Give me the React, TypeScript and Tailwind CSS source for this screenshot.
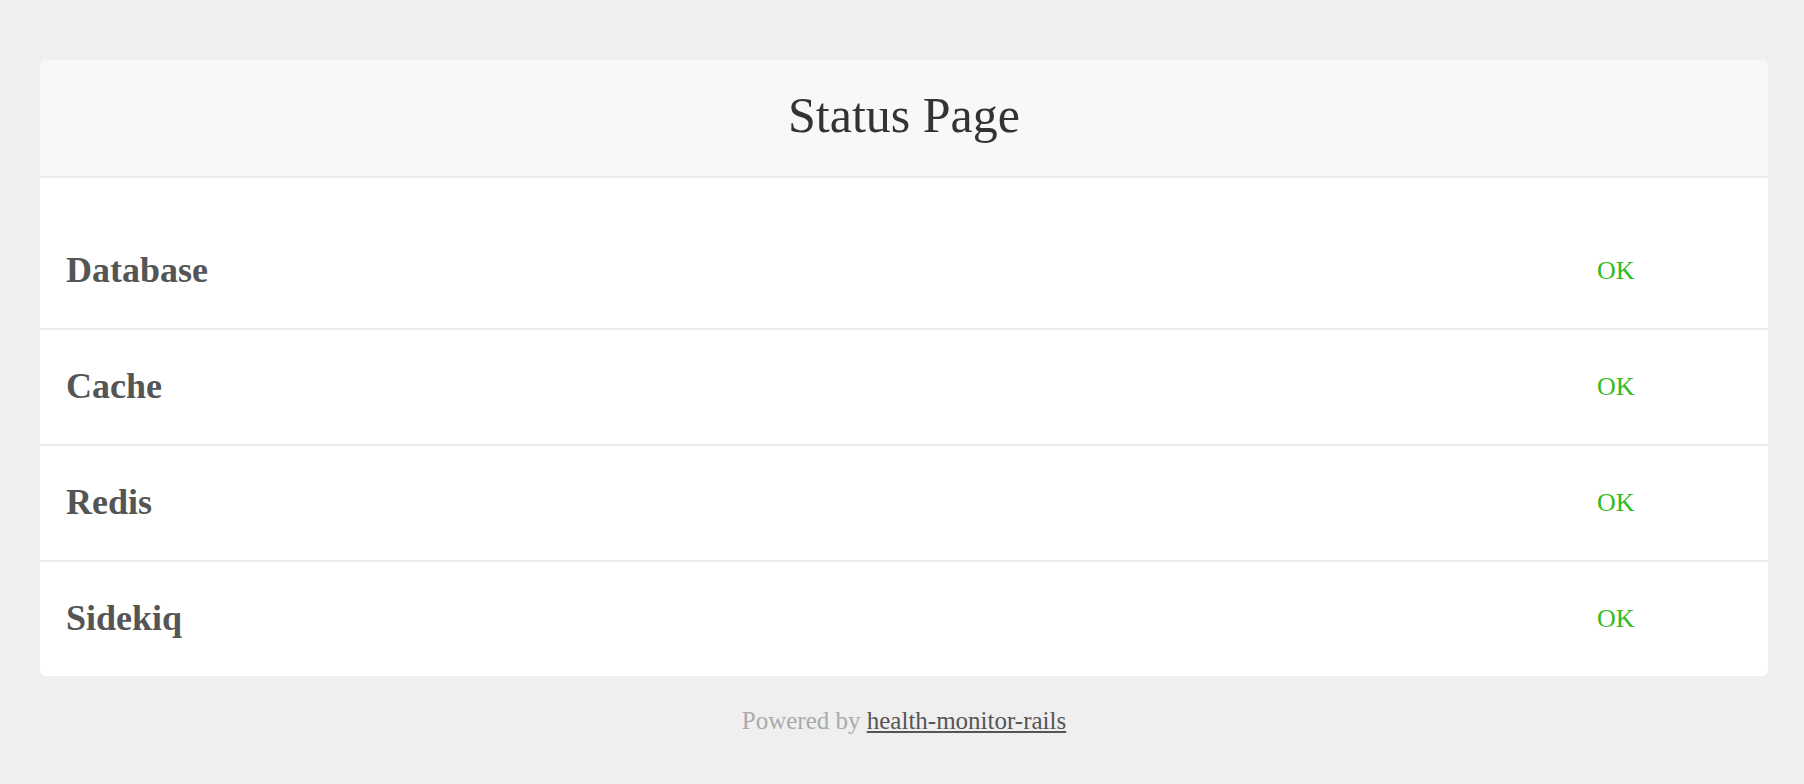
import React from "react";

const items = ["Database", "Cache", "Redis", "Sidekiq"];

export default function App() {
  return (
    <div
      className="min-h-[784px] w-full bg-[#efefef] pt-[60px]"
      style={{ fontFamily: '"Liberation Serif", "Times New Roman", serif' }}
    >
      <div className="ml-[40px] mr-[36px]">
        <div className="overflow-hidden rounded-[6px] bg-white">
          <div className="box-border h-[118px] border-b-2 border-[#ececec] bg-[#f8f8f8] pt-[26px] text-center">
            <h1 className="text-[50px] font-normal leading-[58px] text-[#333]">Status Page</h1>
          </div>
          <div className="pt-[36px]">
            {items.map((name, i) => (
              <div
                key={name}
                className={
                  i < items.length - 1
                    ? "box-border flex h-[116px] items-center border-b-2 border-[#ececec] px-[26px] pb-[3px]"
                    : "box-border flex h-[114px] items-center px-[26px] pb-[3px]"
                }
              >
                <div className="flex-1 text-[36px] font-bold leading-[42px] text-[#555]">{name}</div>
                <div className="w-[145px] pt-[2px] text-left text-[26px] leading-[30px] text-[#33bb22]">OK</div>
              </div>
            ))}
          </div>
        </div>
        <div className="mt-[31px] text-center text-[25px] leading-[28px] text-[#aaa]">
          Powered by{" "}
          <a href="#" className="text-[#555] underline">
            health-monitor-rails
          </a>
        </div>
      </div>
    </div>
  );
}
